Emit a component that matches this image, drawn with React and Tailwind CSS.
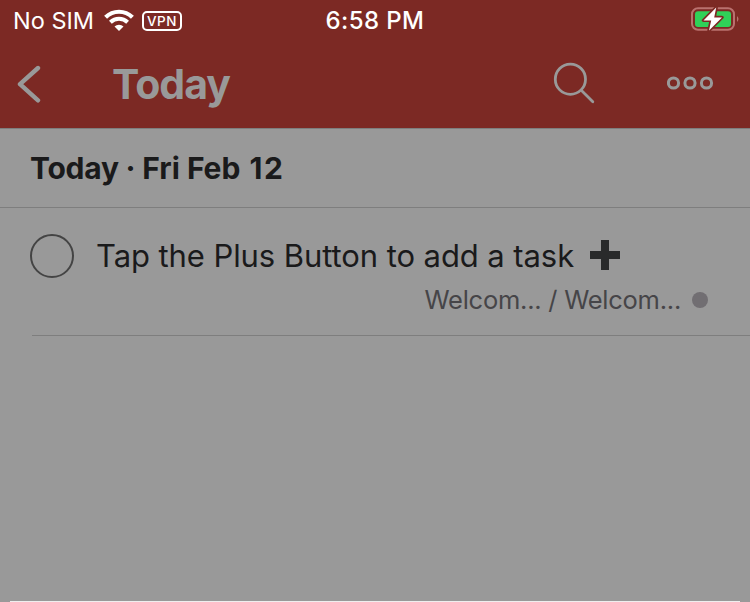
import React from "react";

function Wifi() {
  return (
    <svg className="-mt-px ml-[11px] h-6 w-[30px] shrink-0" viewBox="0 0 30 24" fill="none" stroke="#fff">
      <path d="M1.6 9.2 A19.2 19.2 0 0 1 28.4 9.2" strokeWidth="4.2" />
      <path d="M6.4 14.2 A12.4 12.4 0 0 1 23.6 14.2" strokeWidth="4" />
      <path d="M15 23 L10.5 18.5 A6.5 6.5 0 0 1 19.5 18.5 Z" fill="#fff" stroke="none" />
    </svg>
  );
}

function Battery() {
  return (
    <svg className="-mt-[5px] h-[26px] w-[50px]" viewBox="0 0 50 26">
      <rect x="2" y="3.2" width="42" height="21.6" rx="6" fill="none" stroke="#b9716e" strokeWidth="2" />
      <path d="M47 11 Q50 14 47 17 Z" fill="#b9716e" />
      <rect x="5" y="6.2" width="36" height="15.8" rx="3" fill="#30d158" />
      <path d="M26.2 2.6 L13.5 15.4 H21.2 L19 25.4 L32 12.4 H24.2 Z" fill="#fff" stroke="#7c2924" strokeWidth="3.4" strokeLinejoin="round" paintOrder="stroke" />
    </svg>
  );
}

function StatusBar() {
  return (
    <div className="grid h-10 grid-cols-3 items-center pt-px text-white">
      <div className="flex items-center pl-[13px]">
        <span className="w-[80px] whitespace-nowrap text-[23.5px] leading-6">No SIM</span>
        <Wifi />
        <span className="ml-2 flex h-5 w-10 shrink-0 items-center justify-center rounded-[5px] border-2 border-white text-[13.5px] font-medium leading-4 tracking-[0.6px]">VPN</span>
      </div>
      <div className="text-center text-[24px] font-medium leading-6 tracking-[0.4px]">6:58 PM</div>
      <div className="flex justify-end pr-[10px]">
        <Battery />
      </div>
    </div>
  );
}

function NavBar() {
  return (
    <div className="flex h-[87px] items-center pr-9 text-[#999]">
      <svg className="ml-[17px] h-10 w-6 shrink-0" viewBox="0 0 24 40" fill="none" stroke="currentColor" strokeWidth="4.4" strokeLinecap="round" strokeLinejoin="round">
        <path d="M21 4 L3 20.2 L21 36.4" />
      </svg>
      <h1 className="ml-[71px] text-[41px] font-bold leading-[48px] tracking-[-1px]">Today</h1>
      <svg className="-mt-[2px] ml-auto h-11 w-[42px]" viewBox="0 0 42 44" fill="none" stroke="currentColor" strokeWidth="2.8" strokeLinecap="round">
        <circle cx="17.4" cy="18.2" r="15.1" />
        <path d="M28.5 29.5 L39.8 40.7" />
      </svg>
      <svg className="-mt-[2px] ml-[72px] h-4 w-[47px]" viewBox="0 0 47 16" fill="none" stroke="currentColor" strokeWidth="3">
        <circle cx="6.5" cy="8" r="5.1" />
        <circle cx="23" cy="8" r="5.1" />
        <circle cx="39.5" cy="8" r="5.1" />
      </svg>
    </div>
  );
}

function Task() {
  return (
    <div className="flex h-32 pl-[30px]">
      <span className="mt-[26px] size-11 shrink-0 rounded-full border-2 border-[#444]" />
      <div className="ml-[22px] flex-1 pt-[26px]">
        <div className="flex h-11 items-center whitespace-nowrap text-[31px] leading-10 tracking-[-0.08px] text-[#1a1a1b]">
          <span className="w-[477px]">Tap the Plus Button to add a task</span>
          <svg className="-mt-[2px] ml-[17px] size-[30px]" viewBox="0 0 30 30" fill="#292a2b">
            <path d="M11 0h8v11h11v8H19v11h-8V19H0v-8h11z" />
          </svg>
        </div>
        <div className="flex h-11 items-center justify-end pr-[42px] text-[25.5px] leading-8 text-[#464548]">
          <span className="tracking-[-0.25px]">Welcom... / Welcom...</span>
          <span className="ml-[11px] size-4 rounded-full bg-[#716e72]" />
        </div>
      </div>
    </div>
  );
}

export default function App() {
  return (
    <div className="flex h-[602px] w-[750px] flex-col overflow-hidden bg-[#999] font-['Inter',sans-serif]">
      <header className="h-32 shrink-0 bg-[#7c2924]">
        <StatusBar />
        <NavBar />
      </header>
      <div className="h-px bg-[#7e7e7e]" />
      <h2 className="flex h-[78px] items-center whitespace-pre pl-[30px] text-[30px] font-bold text-[#1a1a1b]">
        <span className="tracking-[-0.25px]">Today · </span>
        <span>Fri Feb </span>
        <span className="ml-[2px] tracking-[1.6px]">12</span>
      </h2>
      <div className="h-px bg-[#7e7e7e]" />
      <Task />
      <div className="-mt-px ml-8 h-px bg-[#7e7e7e]" />
      <div className="mx-[10px] mt-auto h-px bg-[#eee]" />
    </div>
  );
}
